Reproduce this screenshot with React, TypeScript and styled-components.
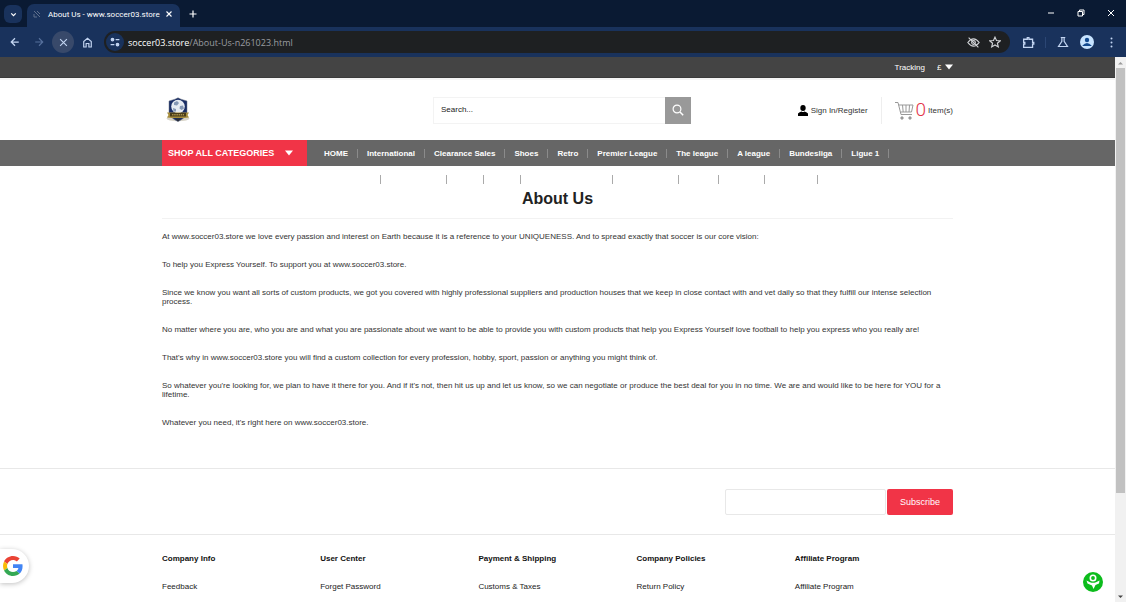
import React from "react";
import styled, { createGlobalStyle } from "styled-components";

const GlobalStyle = createGlobalStyle`
  *, *::before, *::after { box-sizing: border-box; }
  body { margin: 0; background: #fff; }
  button, input, select { font: inherit; color: inherit; margin: 0; padding: 0; border: 0; background: none; }
  ul { list-style: none; margin: 0; padding: 0; }
  a { color: inherit; text-decoration: none; }
  svg { flex: none; }
`;

const Shell = styled.div`
  display: flex;
  flex-direction: column;
  height: 100vh;
  overflow: hidden;
  font-family: "Liberation Sans", Arial, sans-serif;
  font-size: 8px;
  color: #333;
`;

/* ---------- browser chrome ---------- */
const TabStrip = styled.div`
  display: flex;
  flex: none;
  height: 27px;
  padding-left: 4px;
  background: #0a1a33;
  color: #fff;
  font-family: Roboto, "Open Sans", sans-serif;
`;
const IconButton = styled.button<{ $size?: number; $bg?: string; $color?: string }>`
  display: flex;
  flex: none;
  align-items: center;
  justify-content: center;
  width: ${(p) => p.$size ?? 22}px;
  height: ${(p) => p.$size ?? 22}px;
  border-radius: 50%;
  background: ${(p) => p.$bg ?? "transparent"};
  color: ${(p) => p.$color ?? "#c3d5f2"};
`;
const TabMenu = styled(IconButton)`
  width: 18px;
  height: 18px;
  margin-top: 5px;
  border-radius: 6px;
  background: #19325c;
  color: #fff;
`;
const Tab = styled.div`
  display: flex;
  align-items: center;
  width: 153px;
  height: 23px;
  margin: 4px 0 0 5px;
  padding: 0 4px 3px 6px;
  gap: 7px;
  border-radius: 7px 7px 0 0;
  background: #19325c;
  white-space: nowrap;
`;
const TabTitle = styled.span`
  flex: 1;
  min-width: 0;
`;
const NewTab = styled(IconButton)`
  width: 20px;
  margin: 3px 0 0 3px;
  color: #fff;
`;
const WindowControls = styled.div`
  display: flex;
  gap: 8px;
  margin: 2px 4px 0 auto;
`;
const Toolbar = styled.div`
  display: flex;
  flex: none;
  align-items: center;
  height: 30px;
  padding: 0 4px;
  gap: 2px;
  background: #19325c;
  font-family: "Open Sans", "Noto Sans", sans-serif;
`;
const Omnibox = styled.div`
  display: flex;
  flex: 1;
  align-items: center;
  height: 22px;
  margin: 0 5px 0 4px;
  padding: 0 4px 0 2px;
  border-radius: 11px;
  background: #1e2022;
  color: #9a9da1;
  font-size: 9px;
`;
const Url = styled.span`
  flex: 1;
  padding-left: 4px;
  b { color: #fff; font-weight: 400; }
`;
const ToolbarRule = styled.i`
  width: 1px;
  height: 11px;
  margin: 0 4px;
  background: #2b4674;
`;

/* ---------- page frame ---------- */
const Viewport = styled.div`
  display: flex;
  flex: 1;
  min-height: 0;
`;
const Page = styled.div`
  flex: 1;
  overflow: hidden;
  background: #fff;
`;
const ScrollTrack = styled.div`
  display: flex;
  flex-direction: column;
  flex: none;
  align-items: center;
  width: 11px;
  background: #f1f1f1;
`;
const ScrollArrow = styled.button`
  display: flex;
  align-items: center;
  justify-content: center;
  width: 11px;
  height: 11px;
`;
const ScrollThumb = styled.div`
  flex: 0 0 78%;
  width: 9px;
  margin-bottom: auto;
  background: #c1c1c1;
`;
const Container = styled.div`
  max-width: 791px;
  margin: 0 auto;
`;

/* ---------- site header ---------- */
const TopBar = styled.div`
  background: #444;
  color: #fff;
  border-bottom: 1px solid #3a3a3a;
`;
const TopBarInner = styled(Container)`
  display: flex;
  align-items: center;
  justify-content: flex-end;
  gap: 12px;
  height: 20px;
`;
const Currency = styled.label`
  display: flex;
  align-items: center;
  gap: 2px;
  select { appearance: none; width: 6px; }
`;
const Header = styled.header`
  border-top: 2px solid #f5f5f5;
`;
const HeaderInner = styled(Container)`
  display: flex;
  align-items: center;
  height: 60px;
`;
const LogoLink = styled.a`
  flex: 0 0 271px;
  padding-left: 3px;
  line-height: 0;
`;
const Search = styled.form`
  display: flex;
  flex: 0 0 258px;
  height: 27px;
  input {
    flex: 1;
    min-width: 0;
    padding: 0 7px 1px;
    border: 1px solid #f3f3f3;
    border-right: 0;
  }
  input::placeholder { color: #222; opacity: 1; }
  button {
    display: flex;
    align-items: center;
    justify-content: center;
    width: 26px;
    background: #999;
  }
`;
const Account = styled.div`
  display: flex;
  align-items: center;
  margin-left: auto;
`;
const SignIn = styled.a`
  display: flex;
  align-items: center;
  height: 27px;
  gap: 3px;
  padding-right: 13px;
  border-right: 1px solid #eee;
`;
const Cart = styled.a`
  display: flex;
  align-items: center;
  gap: 2px;
  padding-left: 13px;
  b {
    color: #e3344a;
    font: 300 19px/20px Roboto, sans-serif;
  }
`;
const Nav = styled.nav`
  background: #666;
  color: #fff;
  font-weight: 700;
`;
const NavInner = styled(Container)`
  display: flex;
  align-items: center;
  height: 26px;
`;
const Categories = styled.button`
  display: flex;
  align-items: center;
  justify-content: space-between;
  width: 145px;
  height: 26px;
  margin-right: 8px;
  padding: 0 14px 0 6px;
  background: #f13447;
  font-size: 9px;
  white-space: nowrap;
`;
const NavItem = styled.a`
  padding: 0 9px;
  border-right: 1px solid #8b8b8b;
  white-space: nowrap;
  line-height: 9px;
`;
const NavOverflow = styled(Container)`
  display: flex;
  padding: 9px 0 0 152px;
`;
const OverflowSlot = styled.i<{ $width: number }>`
  width: ${(p) => p.$width}px;
  height: 9px;
  border-right: 1px solid #aaa;
`;

/* ---------- article ---------- */
const Title = styled.h1`
  margin: 0;
  padding: 5px 0 10px;
  border-bottom: 1px solid #f2f2f2;
  color: #222;
  font-size: 16px;
  line-height: 19px;
  text-align: center;
`;
const Article = styled.article`
  padding: 13px 0 41px;
  line-height: 9px;
  p { margin: 0 0 19px; padding: 0; }
  p:last-child { margin: 0; }
`;

/* ---------- footer ---------- */
const Newsletter = styled.section`
  border-top: 1px solid #e8e8e8;
  border-bottom: 1px solid #e8e8e8;
`;
const SubscribeForm = styled.form`
  display: flex;
  justify-content: flex-end;
  max-width: 791px;
  margin: 0 auto;
  padding: 20px 0 19px;
  gap: 1px;
  input {
    width: 161px;
    height: 26px;
    padding: 0 6px;
    border: 1px solid #e8e8e8;
    border-radius: 2px;
  }
  button {
    width: 66px;
    border-radius: 2px;
    background: #f13447;
    color: #fff;
    font-size: 9px;
  }
`;
const FooterColumns = styled.footer`
  display: grid;
  grid-template-columns: repeat(5, 1fr);
  max-width: 791px;
  margin: 0 auto;
  padding-top: 19px;
  color: #222;
`;
const FooterHeading = styled.h2`
  margin: 0 0 18px;
  color: #111;
  font-size: 8px;
  line-height: 10px;
`;

/* ---------- floating widgets ---------- */
const GoogleTab = styled.button`
  position: fixed;
  left: 0;
  bottom: 19px;
  display: flex;
  align-items: center;
  width: 29px;
  height: 34px;
  padding-left: 3px;
  border-radius: 0 17px 17px 0;
  background: #fff;
  box-shadow: 0 1px 5px rgba(0, 0, 0, 0.25);
`;
const ChatButton = styled.button`
  position: fixed;
  right: 23px;
  bottom: 10px;
  width: 20px;
  height: 20px;
  line-height: 0;
`;

const Stroke = ({ d, size = 12, width = 1.5 }: { d: string; size?: number; width?: number }) => (
  <svg width={size} height={size} viewBox="0 0 16 16" fill="none" stroke="currentColor" strokeWidth={width}>
    <path d={d} />
  </svg>
);
const Caret = ({ size = 8, color = "#fff" }: { size?: number; color?: string }) => (
  <svg width={size} height={size} viewBox="0 0 8 8"><path d="M0 1.5h8L4 6.5z" fill={color} /></svg>
);
const Crest = () => (
  <svg width="26" height="26" viewBox="0 0 26 26">
    <ellipse cx="13" cy="21.5" rx="11.5" ry="2.8" fill="#d8d4c8" />
    <path d="M13 .8 16 2.200 22 4v12c-1 4-5 6.500-9 8.500-4-2-8-4.500-9-8.500V4l6-1.800z" fill="#1a2e66" stroke="#6d7484" strokeWidth=".5" />
    <circle cx="13" cy="9.500" r="6.800" fill="#e6ebf2" />
    <path d="m9 5.500 3-1.500 2 2-2 2.500-3-.500zM15 9l3-.500 1 3-2.500 1.500-2-1.500zM8 11l3 1v2.500H8.500z" fill="#8497b4" />
    <path d="M2 15.500h22l-1.500 2.500 1.500 2.500-5 .500H7l-5-.500L3.500 18z" fill="#a58c3c" />
    <path d="M5 16h16v3.500H5z" fill="#4a3d18" />
    <path d="M7 17.800h12" stroke="#d0b564" strokeDasharray="1.500 .700" />
    <path d="m10 21.500 3 3 3-3z" fill="#2b2e33" />
  </svg>
);

const navItems = ["HOME", "International", "Clearance Sales", "Shoes", "Retro", "Premier League", "The league", "A league", "Bundesliga", "Ligue 1"];
const overflowWidths = [67, 66, 37, 37, 92, 66, 40, 46, 53];
const paragraphs = [
  "At www.soccer03.store we love every passion and interest on Earth because it is a reference to your UNIQUENESS. And to spread exactly that soccer is our core vision:",
  "To help you Express Yourself. To support you at www.soccer03.store.",
  "Since we know you want all sorts of custom products, we got you covered with highly professional suppliers and production houses that we keep in close contact with and vet daily so that they fulfill our intense selection process.",
  "No matter where you are, who you are and what you are passionate about we want to be able to provide you with custom products that help you Express Yourself love football to help you express who you really are!",
  "That's why in www.soccer03.store you will find a custom collection for every profession, hobby, sport, passion or anything you might think of.",
  "So whatever you're looking for, we plan to have it there for you. And if it's not, then hit us up and let us know, so we can negotiate or produce the best deal for you in no time. We are and would like to be here for YOU for a lifetime.",
  "Whatever you need, it's right here on www.soccer03.store.",
];
const footerLinks = [
  ["Company Info", "Feedback"],
  ["User Center", "Forget Password"],
  ["Payment & Shipping", "Customs & Taxes"],
  ["Company Policies", "Return Policy"],
  ["Affiliate Program", "Affiliate Program"],
];

export default function App() {
  return (
    <Shell>
      <GlobalStyle />
      <TabStrip>
        <TabMenu aria-label="Search tabs"><Stroke d="m4 6 4 4 4-4" size={9} width={2.2} /></TabMenu>
        <Tab>
          <svg width="8" height="8" viewBox="0 0 8 8" fill="none" stroke="#60708c"><path d="M1 1l6 6M4 1l3 3M1 4v3h3" /></svg>
          <TabTitle>About Us - www.soccer03.store</TabTitle>
          <IconButton $size={14} $color="#fff" aria-label="Close tab"><Stroke d="m3 3 10 10M13 3 3 13" size={8} width={2.2} /></IconButton>
        </Tab>
        <NewTab aria-label="New tab"><Stroke d="M8 1v14M1 8h14" size={8} width={2.4} /></NewTab>
        <WindowControls>
          <IconButton $color="#fff" aria-label="Minimize"><Stroke d="M2 8h12" size={8} width={2} /></IconButton>
          <IconButton $color="#fff" aria-label="Restore"><Stroke d="M2 5h9v9H2zM5 5V2h9v9h-3" size={8} width={2} /></IconButton>
          <IconButton $color="#fff" aria-label="Close"><Stroke d="m2 2 12 12M14 2 2 14" size={8} width={2} /></IconButton>
        </WindowControls>
      </TabStrip>
      <Toolbar>
        <IconButton aria-label="Back"><Stroke d="M14 8H2M8 2 2 8l6 6" size={10} width={2} /></IconButton>
        <IconButton $color="#56709c" aria-label="Forward"><Stroke d="M2 8h12M8 2l6 6-6 6" size={10} width={1.8} /></IconButton>
        <IconButton $bg="#38496a" aria-label="Stop"><Stroke d="m2 2 12 12M14 2 2 14" size={9} width={2} /></IconButton>
        <IconButton aria-label="Home"><Stroke d="M2.500 6.500 8 2l5.500 4.500V14.500H10V9.500H6v5H2.500z" size={11} width={1.7} /></IconButton>
        <Omnibox>
          <IconButton $size={18} $bg="#19325c" aria-label="Site information">
            <svg width="10" height="10" viewBox="0 0 16 16" fill="#c3d5f2" stroke="#c3d5f2" strokeWidth="2"><circle cx="4" cy="4" r="2" /><path d="M9 4h6M1 12h6" /><circle cx="12" cy="12" r="2" /></svg>
          </IconButton>
          <Url><b>soccer03.store</b>/About-Us-n261023.html</Url>
          <IconButton $color="#d3d5d8" aria-label="Third-party cookies blocked">
            <svg width="13" height="13" viewBox="0 0 16 16" fill="none" stroke="currentColor" strokeWidth="1.4"><path d="M1 8q7-9 14 0-7 9-14 0zM2 2l12 12" /><circle cx="8" cy="8" r="2.3" /></svg>
          </IconButton>
          <IconButton $color="#d3d5d8" aria-label="Bookmark"><Stroke d="m8 1.500 2 4.500 5 .4-3.800 3.200 1.200 4.900L8 11.900l-4.400 2.600 1.200-4.900L1 6.400 6 6z" size={12} /></IconButton>
        </Omnibox>
        <IconButton aria-label="Extensions"><Stroke d="M2 4h4.500V2h2v2H13v4h1.500v2H13v4H2v-4h1.500V8H2z" size={13} width={1.6} /></IconButton>
        <ToolbarRule />
        <IconButton aria-label="Labs"><Stroke d="M5 2h6M6.500 2v5L2 14h12L9.500 7V2" size={12} width={1.6} /></IconButton>
        <IconButton aria-label="Profile">
          <svg width="14" height="14" viewBox="0 0 14 14"><circle cx="7" cy="7" r="7" fill="#c7e3ff" /><circle cx="7" cy="5" r="2.200" fill="#12498f" /><path d="M2.500 10.500q4.500-5 9 0v.5h-9z" fill="#12498f" /></svg>
        </IconButton>
        <IconButton aria-label="Menu">
          <svg width="3" height="11" viewBox="0 0 3 11" fill="#c3d5f2"><circle cx="1.500" cy="1.500" r="1" /><circle cx="1.500" cy="5.500" r="1" /><circle cx="1.500" cy="9.500" r="1" /></svg>
        </IconButton>
      </Toolbar>

      <Viewport>
        <Page>
          <TopBar>
            <TopBarInner>
              <a href="#tracking">Tracking</a>
              <Currency>
                <select aria-label="Currency"><option>£</option></select>
                <Caret />
              </Currency>
            </TopBarInner>
          </TopBar>
          <Header>
            <HeaderInner>
              <LogoLink href="#home" aria-label="Soccer03 store"><Crest /></LogoLink>
              <Search>
                <input aria-label="Search" placeholder="Search..." />
                <button type="button" aria-label="Search">
                  <svg width="12" height="12" viewBox="0 0 12 12" fill="none" stroke="#fff" strokeWidth="1.2"><circle cx="5" cy="5" r="3.9" /><path d="m8 8 3.200 3.200" strokeWidth="1.5" /></svg>
                </button>
              </Search>
              <Account>
                <SignIn href="#account">
                  <svg width="10" height="11" viewBox="0 0 10 11" fill="#000"><ellipse cx="5" cy="3" rx="2.700" ry="3" /><path d="M0 11V8.500Q1.500 7 3.500 6.500q1.500 1 3 0Q8.500 7 10 8.500V11z" /></svg>
                  Sign In/Register
                </SignIn>
                <Cart href="#cart">
                  <svg width="19" height="19" viewBox="0 0 19 19" fill="none" stroke="#999"><path d="M0 1.500h3l3 12h11M3.500 4h14.500l-1.500 7H5.500M7.500 4l.7 7M11 4v7M14.500 4l-.5 7" /><circle cx="7" cy="17" r="1.200" fill="#999" /><circle cx="15" cy="17" r="1.200" fill="#999" /></svg>
                  <b>0</b>Item(s)
                </Cart>
              </Account>
            </HeaderInner>
          </Header>
          <Nav>
            <NavInner>
              <Categories>SHOP ALL CATEGORIES<Caret /></Categories>
              {navItems.map((item) => <NavItem href="#shop" key={item}>{item}</NavItem>)}
            </NavInner>
          </Nav>
          <NavOverflow aria-hidden="true">
            {overflowWidths.map((width, i) => <OverflowSlot $width={width} key={i} />)}
          </NavOverflow>
          <Container as="main">
            <Title>About Us</Title>
            <Article>{paragraphs.map((text) => <p key={text}>{text}</p>)}</Article>
          </Container>
          <Newsletter>
            <SubscribeForm>
              <input type="email" aria-label="Email address" />
              <button type="button">Subscribe</button>
            </SubscribeForm>
          </Newsletter>
          <FooterColumns>
            {footerLinks.map(([heading, link]) => (
              <section key={heading}>
                <FooterHeading>{heading}</FooterHeading>
                <a href="#info">{link}</a>
              </section>
            ))}
          </FooterColumns>
        </Page>
        <ScrollTrack>
          <ScrollArrow aria-label="Scroll up"><svg width="5" height="4" viewBox="0 0 5 4"><path d="M0 3.500 2.500 1 5 3.500z" fill="#999" /></svg></ScrollArrow>
          <ScrollThumb />
          <ScrollArrow aria-label="Scroll down"><svg width="5" height="4" viewBox="0 0 5 4"><path d="M0 .5h5L2.500 3z" fill="#444" /></svg></ScrollArrow>
        </ScrollTrack>
      </Viewport>

      <GoogleTab aria-label="Google sign-in">
        <svg width="20" height="20" viewBox="0 0 48 48">
          <path fill="#ea4335" d="M24 9.500c3.540 0 6.710 1.220 9.210 3.600l6.850-6.850C35.900 2.380 30.470 0 24 0 14.620 0 6.510 5.380 2.560 13.220l7.980 6.190C12.430 13.720 17.740 9.500 24 9.500z" />
          <path fill="#4285f4" d="M46.980 24.550c0-1.570-.150-3.090-.380-4.550H24v9.020h12.940c-.580 2.960-2.260 5.480-4.780 7.180l7.730 6c4.510-4.180 7.090-10.360 7.090-17.650z" />
          <path fill="#fbbc05" d="M10.530 28.590c-.480-1.450-.760-2.990-.760-4.590s.270-3.140.760-4.590l-7.980-6.190C.920 16.460 0 20.120 0 24c0 3.880.920 7.540 2.560 10.780l7.970-6.190z" />
          <path fill="#34a853" d="M24 48c6.480 0 11.930-2.130 15.890-5.810l-7.730-6c-2.150 1.450-4.920 2.300-8.160 2.300-6.260 0-11.570-4.220-13.470-9.910l-7.980 6.190C6.510 42.620 14.620 48 24 48z" />
        </svg>
      </GoogleTab>
      <ChatButton aria-label="Live chat">
        <svg width="20" height="20" viewBox="0 0 20 20"><circle cx="10" cy="10" r="10" fill="#0cbc1c" /><circle cx="10" cy="6" r="2.700" fill="none" stroke="#fff" strokeWidth="1.6" /><path d="M3.500 8.500 7 10.200q3 1 6 0l3.500-1.700-.5 3-3.500 1.500L10.500 17 9 13.500 4.500 11.500z" fill="#fff" /></svg>
      </ChatButton>
    </Shell>
  );
}
